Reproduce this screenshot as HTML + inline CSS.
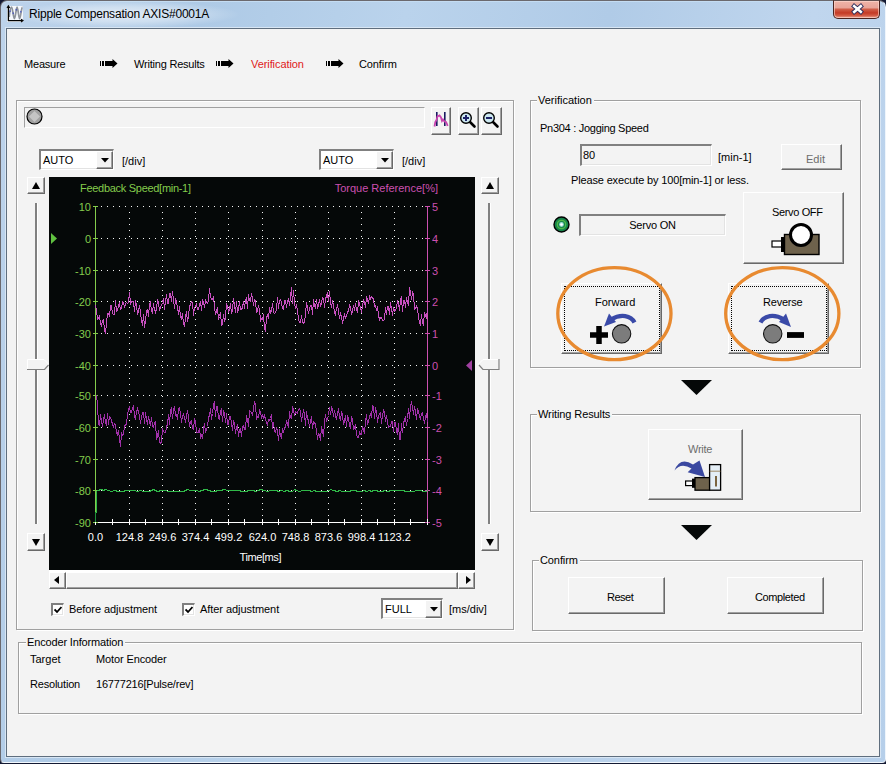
<!DOCTYPE html>
<html><head><meta charset="utf-8">
<style>
*{margin:0;padding:0;box-sizing:border-box}
html,body{width:886px;height:764px;overflow:hidden;background:#141a34}
body{position:relative;font-family:"Liberation Sans",sans-serif;font-size:11px;color:#000}
.a{position:absolute}
.t{position:absolute;white-space:nowrap;line-height:13px;font-size:11px}
.win{position:absolute;left:0;top:0;width:886px;height:763px;border-radius:7px 7px 4px 4px;
 background:linear-gradient(100deg,#bdd3eb 0%,#aecae6 20%,#bad3ec 40%,#b0cbe7 60%,#c0d6ee 80%,#b6cfea 100%);
 border:1px solid #6b696e;border-right-color:#eef5fc;border-bottom-color:#f2f8fd;box-shadow:inset 0 1px 0 #c4dcf2}
.client{position:absolute;left:6px;top:28px;width:874px;height:729px;background:#f3f3f3;border:1px solid #5f6e7e;box-shadow:0 0 0 1px #d8e6f4}
.grp{position:absolute;border:1px solid #a0a0a0;box-shadow:1px 1px 0 #fff, inset 1px 1px 0 #fff}
.gt{position:absolute;background:#f3f3f3;padding:0 2px 0 1px;line-height:13px;white-space:nowrap}
.btn{position:absolute;background:#f3f3f3;border-top:1px solid #fff;border-left:1px solid #fff;border-right:1px solid #696969;border-bottom:1px solid #696969;box-shadow:inset -1px -1px 0 #a0a0a0}
.sunk{position:absolute;border-top:1px solid #a0a0a0;border-left:1px solid #a0a0a0;border-right:1px solid #fff;border-bottom:1px solid #fff}
.sunk2{position:absolute;border-top:2px solid #808080;border-left:2px solid #808080;border-right:1px solid #fff;border-bottom:1px solid #fff;box-shadow:inset -1px -1px 0 #e3e3e3}
</style></head><body>
<div class="win"></div>
<!-- title icon -->
<svg class="a" style="left:4px;top:3px" width="24" height="22" viewBox="4 3 24 22">
<rect x="7" y="6" width="16" height="16" fill="#ffffff" opacity="0.85"/>
<path d="M9.2,17 C10,9 10.8,7 11.6,7 C12.5,7 13.4,18.6 14.4,18.6 C15.4,18.6 16.2,7 17.1,7 C18,7 18.7,18.6 19.6,18.6 C20.6,18.6 21.5,7 22.4,7" fill="none" stroke="#8a9098" stroke-width="1.7"/>
<path d="M9.8,10.5 L10.2,12 M13,12.5 L13.4,14 M16,10.5 L16.4,9 M20.6,12.5 L21,11" stroke="#4050c0" stroke-width="1.2"/>
<path d="M8.4,6.5 V20.6 H22.5" fill="none" stroke="#000" stroke-width="1.3"/>
<path d="M7,8 L8.4,5.8 L9.8,8 M21,19.2 L23,20.6 L21,22" fill="none" stroke="#000" stroke-width="1.1"/>
</svg>
<div class="a" style="left:10px;top:1px;width:230px;height:27px;background:radial-gradient(ellipse 50% 50% at 50% 50%,rgba(255,255,255,0.6) 0%,rgba(255,255,255,0.35) 55%,rgba(255,255,255,0) 100%)"></div>
<div class="t" style="left:29px;top:7px;font-size:12px;line-height:15px;color:#000;letter-spacing:-0.2px">Ripple Compensation AXIS#0001A</div>
<!-- close button -->
<div class="a" style="left:833px;top:0;width:47px;height:19px;border:1px solid #4a2420;border-top:1px solid #605050;border-radius:0 0 5px 5px;background:linear-gradient(#eeb4a8 0%,#e8a498 40%,#d0604a 48%,#c43a26 70%,#d25a44 85%,#e9a493 100%);box-shadow:inset 0 0 0 1px rgba(255,220,210,0.6)"></div>
<svg class="a" style="left:851px;top:3px" width="13" height="12" viewBox="0 0 13 12">
<path d="M3.2,3.2 L9.8,8.8 M9.8,3.2 L3.2,8.8" stroke="#2c2c5a" stroke-width="4.4" stroke-linecap="square"/>
<path d="M3.2,3.2 L9.8,8.8 M9.8,3.2 L3.2,8.8" stroke="#ffffff" stroke-width="2.6" stroke-linecap="square"/>
</svg>

<div class="client"></div>

<!-- steps -->
<div class="t" style="left:24px;top:58px;letter-spacing:-0.2px">Measure</div>
<div class="t" style="left:134px;top:58px;letter-spacing:-0.21px">Writing Results</div>
<div class="t" style="left:251px;top:58px;color:#e02020;letter-spacing:-0.08px">Verification</div>
<div class="t" style="left:359px;top:58px;letter-spacing:-0.11px">Confirm</div>
<svg class="a" style="left:99px;top:58px" width="20" height="11"><path d="M1,3h1v5h-1z M3,3h2v5h-2z M6,3h7.5v-2l5,4.5l-5,4.5v-2h-7.5z" fill="#000"/></svg>
<svg class="a" style="left:215px;top:58px" width="20" height="11"><path d="M1,3h1v5h-1z M3,3h2v5h-2z M6,3h7.5v-2l5,4.5l-5,4.5v-2h-7.5z" fill="#000"/></svg>
<svg class="a" style="left:325px;top:58px" width="20" height="11"><path d="M1,3h1v5h-1z M3,3h2v5h-2z M6,3h7.5v-2l5,4.5l-5,4.5v-2h-7.5z" fill="#000"/></svg>

<!-- chart group -->
<div class="grp" style="left:16px;top:100px;width:498px;height:530px"></div>
<div class="sunk" style="left:24px;top:107px;width:401px;height:21px"></div>
<svg class="a" style="left:26px;top:108px" width="17" height="17" viewBox="0 0 17 17">
<circle cx="8.5" cy="8.5" r="7.5" fill="#a0a0a0" stroke="#000" stroke-width="1.2"/>
<path d="M8.5,3 L14,8.5 L8.5,14 L3,8.5z" fill="#c4c4c4"/>
</svg>
<!-- toolbar buttons -->
<div class="btn" style="left:431px;top:107px;width:20px;height:28px"></div>
<div class="btn" style="left:458px;top:107px;width:21px;height:28px"></div>
<div class="btn" style="left:481px;top:107px;width:21px;height:28px"></div>
<svg class="a" style="left:428px;top:104px" width="28" height="36" viewBox="428 104 28 36">
<path d="M436.8,112 V126 M444.8,112 V126" stroke="#1a1a60" stroke-width="1.6"/>
<path d="M434.5,126.5 L435.3,122 L436.5,120 L437.5,116.5 L439.5,115.5 L441,117.5 L442,121 L443,119.5 L444.5,121.5 L446,122 L447,124 L447.6,126" fill="none" stroke="#c844b0" stroke-width="1.8"/>
</svg>
<svg class="a" style="left:459px;top:111px" width="20" height="20" viewBox="0 0 20 20">
<path d="M11,11 L15.5,15.5" stroke="#000" stroke-width="2.6" stroke-linecap="round"/>
<circle cx="7" cy="7" r="5.3" fill="#cce8f0" stroke="#000" stroke-width="1.4"/>
<path d="M4,7 H10 M7,4 V10" stroke="#1c2068" stroke-width="2"/>
</svg>
<svg class="a" style="left:482px;top:111px" width="20" height="20" viewBox="0 0 20 20">
<path d="M11,11 L15.5,15.5" stroke="#000" stroke-width="2.6" stroke-linecap="round"/>
<circle cx="7" cy="7" r="5.3" fill="#cce8f0" stroke="#000" stroke-width="1.4"/>
<path d="M4,7 H10" stroke="#1c2068" stroke-width="2"/>
</svg>

<!-- combos -->
<div class="sunk2" style="left:39px;top:149px;width:75px;height:21px;background:#fff"></div>
<div class="btn" style="left:96px;top:151px;width:17px;height:18px"></div>
<svg class="a" style="left:101px;top:158px" width="8" height="5"><path d="M0,0H8L4,4.5z" fill="#000"/></svg>
<div class="t" style="left:43px;top:154px">AUTO</div>
<div class="t" style="left:122px;top:155px">[/div]</div>

<div class="sunk2" style="left:319px;top:149px;width:75px;height:21px;background:#fff"></div>
<div class="btn" style="left:376px;top:151px;width:17px;height:18px"></div>
<svg class="a" style="left:381px;top:158px" width="8" height="5"><path d="M0,0H8L4,4.5z" fill="#000"/></svg>
<div class="t" style="left:323px;top:154px">AUTO</div>
<div class="t" style="left:402px;top:155px">[/div]</div>

<!-- vertical sliders left -->
<div class="btn" style="left:27px;top:177px;width:18px;height:17px"></div>
<svg class="a" style="left:32px;top:182px" width="8" height="7"><path d="M0,7H8L4,0z" fill="#000"/></svg>
<div class="a" style="left:35px;top:203px;width:2px;height:321px;background:#808080;box-shadow:1px 0 0 #fff"></div>
<svg class="a" style="left:27px;top:359px" width="22" height="11"><path d="M0.5,0.5 H17 L21.5,5 L17,10.5 H0.5z" fill="#f3f3f3" stroke="#fff"/><path d="M0,10.5 H17.5 L21.5,6" fill="none" stroke="#808080" stroke-width="1.2"/></svg>
<div class="btn" style="left:27px;top:533px;width:18px;height:18px"></div>
<svg class="a" style="left:32px;top:539px" width="8" height="7"><path d="M0,0H8L4,7z" fill="#000"/></svg>

<!-- vertical sliders right -->
<div class="btn" style="left:481px;top:177px;width:18px;height:17px"></div>
<svg class="a" style="left:486px;top:182px" width="8" height="7"><path d="M0,7H8L4,0z" fill="#000"/></svg>
<div class="a" style="left:488px;top:203px;width:2px;height:321px;background:#808080;box-shadow:1px 0 0 #fff"></div>
<svg class="a" style="left:478px;top:359px" width="22" height="11"><path d="M21.5,0.5 H5 L0.5,5 L5,10.5 H21.5z" fill="#f3f3f3" stroke="#fff"/><path d="M21,0 V10.5 H5 L1,6" fill="none" stroke="#808080" stroke-width="1.2"/></svg>
<div class="btn" style="left:481px;top:533px;width:18px;height:18px"></div>
<svg class="a" style="left:486px;top:539px" width="8" height="7"><path d="M0,0H8L4,7z" fill="#000"/></svg>

<svg width="886" height="764" style="position:absolute;left:0;top:0">
<rect x="49" y="177" width="426" height="393" fill="#050808"/>
<g fill="#f4f4f4" shape-rendering="crispEdges"><rect x="101" y="206" width="1" height="1"/><rect x="107" y="206" width="1" height="1"/><rect x="113" y="206" width="1" height="1"/><rect x="119" y="206" width="1" height="1"/><rect x="125" y="206" width="1" height="1"/><rect x="131" y="206" width="1" height="1"/><rect x="137" y="206" width="1" height="1"/><rect x="143" y="206" width="1" height="1"/><rect x="149" y="206" width="1" height="1"/><rect x="155" y="206" width="1" height="1"/><rect x="161" y="206" width="1" height="1"/><rect x="167" y="206" width="1" height="1"/><rect x="173" y="206" width="1" height="1"/><rect x="179" y="206" width="1" height="1"/><rect x="184" y="206" width="1" height="1"/><rect x="190" y="206" width="1" height="1"/><rect x="196" y="206" width="1" height="1"/><rect x="202" y="206" width="1" height="1"/><rect x="208" y="206" width="1" height="1"/><rect x="214" y="206" width="1" height="1"/><rect x="220" y="206" width="1" height="1"/><rect x="226" y="206" width="1" height="1"/><rect x="232" y="206" width="1" height="1"/><rect x="238" y="206" width="1" height="1"/><rect x="244" y="206" width="1" height="1"/><rect x="250" y="206" width="1" height="1"/><rect x="256" y="206" width="1" height="1"/><rect x="262" y="206" width="1" height="1"/><rect x="267" y="206" width="1" height="1"/><rect x="273" y="206" width="1" height="1"/><rect x="279" y="206" width="1" height="1"/><rect x="285" y="206" width="1" height="1"/><rect x="291" y="206" width="1" height="1"/><rect x="297" y="206" width="1" height="1"/><rect x="303" y="206" width="1" height="1"/><rect x="309" y="206" width="1" height="1"/><rect x="315" y="206" width="1" height="1"/><rect x="321" y="206" width="1" height="1"/><rect x="327" y="206" width="1" height="1"/><rect x="333" y="206" width="1" height="1"/><rect x="339" y="206" width="1" height="1"/><rect x="345" y="206" width="1" height="1"/><rect x="350" y="206" width="1" height="1"/><rect x="356" y="206" width="1" height="1"/><rect x="362" y="206" width="1" height="1"/><rect x="368" y="206" width="1" height="1"/><rect x="374" y="206" width="1" height="1"/><rect x="380" y="206" width="1" height="1"/><rect x="386" y="206" width="1" height="1"/><rect x="392" y="206" width="1" height="1"/><rect x="398" y="206" width="1" height="1"/><rect x="404" y="206" width="1" height="1"/><rect x="410" y="206" width="1" height="1"/><rect x="416" y="206" width="1" height="1"/><rect x="422" y="206" width="1" height="1"/><rect x="101" y="238" width="1" height="1"/><rect x="107" y="238" width="1" height="1"/><rect x="113" y="238" width="1" height="1"/><rect x="119" y="238" width="1" height="1"/><rect x="125" y="238" width="1" height="1"/><rect x="131" y="238" width="1" height="1"/><rect x="137" y="238" width="1" height="1"/><rect x="143" y="238" width="1" height="1"/><rect x="149" y="238" width="1" height="1"/><rect x="155" y="238" width="1" height="1"/><rect x="161" y="238" width="1" height="1"/><rect x="167" y="238" width="1" height="1"/><rect x="173" y="238" width="1" height="1"/><rect x="179" y="238" width="1" height="1"/><rect x="184" y="238" width="1" height="1"/><rect x="190" y="238" width="1" height="1"/><rect x="196" y="238" width="1" height="1"/><rect x="202" y="238" width="1" height="1"/><rect x="208" y="238" width="1" height="1"/><rect x="214" y="238" width="1" height="1"/><rect x="220" y="238" width="1" height="1"/><rect x="226" y="238" width="1" height="1"/><rect x="232" y="238" width="1" height="1"/><rect x="238" y="238" width="1" height="1"/><rect x="244" y="238" width="1" height="1"/><rect x="250" y="238" width="1" height="1"/><rect x="256" y="238" width="1" height="1"/><rect x="262" y="238" width="1" height="1"/><rect x="267" y="238" width="1" height="1"/><rect x="273" y="238" width="1" height="1"/><rect x="279" y="238" width="1" height="1"/><rect x="285" y="238" width="1" height="1"/><rect x="291" y="238" width="1" height="1"/><rect x="297" y="238" width="1" height="1"/><rect x="303" y="238" width="1" height="1"/><rect x="309" y="238" width="1" height="1"/><rect x="315" y="238" width="1" height="1"/><rect x="321" y="238" width="1" height="1"/><rect x="327" y="238" width="1" height="1"/><rect x="333" y="238" width="1" height="1"/><rect x="339" y="238" width="1" height="1"/><rect x="345" y="238" width="1" height="1"/><rect x="350" y="238" width="1" height="1"/><rect x="356" y="238" width="1" height="1"/><rect x="362" y="238" width="1" height="1"/><rect x="368" y="238" width="1" height="1"/><rect x="374" y="238" width="1" height="1"/><rect x="380" y="238" width="1" height="1"/><rect x="386" y="238" width="1" height="1"/><rect x="392" y="238" width="1" height="1"/><rect x="398" y="238" width="1" height="1"/><rect x="404" y="238" width="1" height="1"/><rect x="410" y="238" width="1" height="1"/><rect x="416" y="238" width="1" height="1"/><rect x="422" y="238" width="1" height="1"/><rect x="101" y="270" width="1" height="1"/><rect x="107" y="270" width="1" height="1"/><rect x="113" y="270" width="1" height="1"/><rect x="119" y="270" width="1" height="1"/><rect x="125" y="270" width="1" height="1"/><rect x="131" y="270" width="1" height="1"/><rect x="137" y="270" width="1" height="1"/><rect x="143" y="270" width="1" height="1"/><rect x="149" y="270" width="1" height="1"/><rect x="155" y="270" width="1" height="1"/><rect x="161" y="270" width="1" height="1"/><rect x="167" y="270" width="1" height="1"/><rect x="173" y="270" width="1" height="1"/><rect x="179" y="270" width="1" height="1"/><rect x="184" y="270" width="1" height="1"/><rect x="190" y="270" width="1" height="1"/><rect x="196" y="270" width="1" height="1"/><rect x="202" y="270" width="1" height="1"/><rect x="208" y="270" width="1" height="1"/><rect x="214" y="270" width="1" height="1"/><rect x="220" y="270" width="1" height="1"/><rect x="226" y="270" width="1" height="1"/><rect x="232" y="270" width="1" height="1"/><rect x="238" y="270" width="1" height="1"/><rect x="244" y="270" width="1" height="1"/><rect x="250" y="270" width="1" height="1"/><rect x="256" y="270" width="1" height="1"/><rect x="262" y="270" width="1" height="1"/><rect x="267" y="270" width="1" height="1"/><rect x="273" y="270" width="1" height="1"/><rect x="279" y="270" width="1" height="1"/><rect x="285" y="270" width="1" height="1"/><rect x="291" y="270" width="1" height="1"/><rect x="297" y="270" width="1" height="1"/><rect x="303" y="270" width="1" height="1"/><rect x="309" y="270" width="1" height="1"/><rect x="315" y="270" width="1" height="1"/><rect x="321" y="270" width="1" height="1"/><rect x="327" y="270" width="1" height="1"/><rect x="333" y="270" width="1" height="1"/><rect x="339" y="270" width="1" height="1"/><rect x="345" y="270" width="1" height="1"/><rect x="350" y="270" width="1" height="1"/><rect x="356" y="270" width="1" height="1"/><rect x="362" y="270" width="1" height="1"/><rect x="368" y="270" width="1" height="1"/><rect x="374" y="270" width="1" height="1"/><rect x="380" y="270" width="1" height="1"/><rect x="386" y="270" width="1" height="1"/><rect x="392" y="270" width="1" height="1"/><rect x="398" y="270" width="1" height="1"/><rect x="404" y="270" width="1" height="1"/><rect x="410" y="270" width="1" height="1"/><rect x="416" y="270" width="1" height="1"/><rect x="422" y="270" width="1" height="1"/><rect x="101" y="301" width="1" height="1"/><rect x="107" y="301" width="1" height="1"/><rect x="113" y="301" width="1" height="1"/><rect x="119" y="301" width="1" height="1"/><rect x="125" y="301" width="1" height="1"/><rect x="131" y="301" width="1" height="1"/><rect x="137" y="301" width="1" height="1"/><rect x="143" y="301" width="1" height="1"/><rect x="149" y="301" width="1" height="1"/><rect x="155" y="301" width="1" height="1"/><rect x="161" y="301" width="1" height="1"/><rect x="167" y="301" width="1" height="1"/><rect x="173" y="301" width="1" height="1"/><rect x="179" y="301" width="1" height="1"/><rect x="184" y="301" width="1" height="1"/><rect x="190" y="301" width="1" height="1"/><rect x="196" y="301" width="1" height="1"/><rect x="202" y="301" width="1" height="1"/><rect x="208" y="301" width="1" height="1"/><rect x="214" y="301" width="1" height="1"/><rect x="220" y="301" width="1" height="1"/><rect x="226" y="301" width="1" height="1"/><rect x="232" y="301" width="1" height="1"/><rect x="238" y="301" width="1" height="1"/><rect x="244" y="301" width="1" height="1"/><rect x="250" y="301" width="1" height="1"/><rect x="256" y="301" width="1" height="1"/><rect x="262" y="301" width="1" height="1"/><rect x="267" y="301" width="1" height="1"/><rect x="273" y="301" width="1" height="1"/><rect x="279" y="301" width="1" height="1"/><rect x="285" y="301" width="1" height="1"/><rect x="291" y="301" width="1" height="1"/><rect x="297" y="301" width="1" height="1"/><rect x="303" y="301" width="1" height="1"/><rect x="309" y="301" width="1" height="1"/><rect x="315" y="301" width="1" height="1"/><rect x="321" y="301" width="1" height="1"/><rect x="327" y="301" width="1" height="1"/><rect x="333" y="301" width="1" height="1"/><rect x="339" y="301" width="1" height="1"/><rect x="345" y="301" width="1" height="1"/><rect x="350" y="301" width="1" height="1"/><rect x="356" y="301" width="1" height="1"/><rect x="362" y="301" width="1" height="1"/><rect x="368" y="301" width="1" height="1"/><rect x="374" y="301" width="1" height="1"/><rect x="380" y="301" width="1" height="1"/><rect x="386" y="301" width="1" height="1"/><rect x="392" y="301" width="1" height="1"/><rect x="398" y="301" width="1" height="1"/><rect x="404" y="301" width="1" height="1"/><rect x="410" y="301" width="1" height="1"/><rect x="416" y="301" width="1" height="1"/><rect x="422" y="301" width="1" height="1"/><rect x="101" y="333" width="1" height="1"/><rect x="107" y="333" width="1" height="1"/><rect x="113" y="333" width="1" height="1"/><rect x="119" y="333" width="1" height="1"/><rect x="125" y="333" width="1" height="1"/><rect x="131" y="333" width="1" height="1"/><rect x="137" y="333" width="1" height="1"/><rect x="143" y="333" width="1" height="1"/><rect x="149" y="333" width="1" height="1"/><rect x="155" y="333" width="1" height="1"/><rect x="161" y="333" width="1" height="1"/><rect x="167" y="333" width="1" height="1"/><rect x="173" y="333" width="1" height="1"/><rect x="179" y="333" width="1" height="1"/><rect x="184" y="333" width="1" height="1"/><rect x="190" y="333" width="1" height="1"/><rect x="196" y="333" width="1" height="1"/><rect x="202" y="333" width="1" height="1"/><rect x="208" y="333" width="1" height="1"/><rect x="214" y="333" width="1" height="1"/><rect x="220" y="333" width="1" height="1"/><rect x="226" y="333" width="1" height="1"/><rect x="232" y="333" width="1" height="1"/><rect x="238" y="333" width="1" height="1"/><rect x="244" y="333" width="1" height="1"/><rect x="250" y="333" width="1" height="1"/><rect x="256" y="333" width="1" height="1"/><rect x="262" y="333" width="1" height="1"/><rect x="267" y="333" width="1" height="1"/><rect x="273" y="333" width="1" height="1"/><rect x="279" y="333" width="1" height="1"/><rect x="285" y="333" width="1" height="1"/><rect x="291" y="333" width="1" height="1"/><rect x="297" y="333" width="1" height="1"/><rect x="303" y="333" width="1" height="1"/><rect x="309" y="333" width="1" height="1"/><rect x="315" y="333" width="1" height="1"/><rect x="321" y="333" width="1" height="1"/><rect x="327" y="333" width="1" height="1"/><rect x="333" y="333" width="1" height="1"/><rect x="339" y="333" width="1" height="1"/><rect x="345" y="333" width="1" height="1"/><rect x="350" y="333" width="1" height="1"/><rect x="356" y="333" width="1" height="1"/><rect x="362" y="333" width="1" height="1"/><rect x="368" y="333" width="1" height="1"/><rect x="374" y="333" width="1" height="1"/><rect x="380" y="333" width="1" height="1"/><rect x="386" y="333" width="1" height="1"/><rect x="392" y="333" width="1" height="1"/><rect x="398" y="333" width="1" height="1"/><rect x="404" y="333" width="1" height="1"/><rect x="410" y="333" width="1" height="1"/><rect x="416" y="333" width="1" height="1"/><rect x="422" y="333" width="1" height="1"/><rect x="101" y="365" width="1" height="1"/><rect x="107" y="365" width="1" height="1"/><rect x="113" y="365" width="1" height="1"/><rect x="119" y="365" width="1" height="1"/><rect x="125" y="365" width="1" height="1"/><rect x="131" y="365" width="1" height="1"/><rect x="137" y="365" width="1" height="1"/><rect x="143" y="365" width="1" height="1"/><rect x="149" y="365" width="1" height="1"/><rect x="155" y="365" width="1" height="1"/><rect x="161" y="365" width="1" height="1"/><rect x="167" y="365" width="1" height="1"/><rect x="173" y="365" width="1" height="1"/><rect x="179" y="365" width="1" height="1"/><rect x="184" y="365" width="1" height="1"/><rect x="190" y="365" width="1" height="1"/><rect x="196" y="365" width="1" height="1"/><rect x="202" y="365" width="1" height="1"/><rect x="208" y="365" width="1" height="1"/><rect x="214" y="365" width="1" height="1"/><rect x="220" y="365" width="1" height="1"/><rect x="226" y="365" width="1" height="1"/><rect x="232" y="365" width="1" height="1"/><rect x="238" y="365" width="1" height="1"/><rect x="244" y="365" width="1" height="1"/><rect x="250" y="365" width="1" height="1"/><rect x="256" y="365" width="1" height="1"/><rect x="262" y="365" width="1" height="1"/><rect x="267" y="365" width="1" height="1"/><rect x="273" y="365" width="1" height="1"/><rect x="279" y="365" width="1" height="1"/><rect x="285" y="365" width="1" height="1"/><rect x="291" y="365" width="1" height="1"/><rect x="297" y="365" width="1" height="1"/><rect x="303" y="365" width="1" height="1"/><rect x="309" y="365" width="1" height="1"/><rect x="315" y="365" width="1" height="1"/><rect x="321" y="365" width="1" height="1"/><rect x="327" y="365" width="1" height="1"/><rect x="333" y="365" width="1" height="1"/><rect x="339" y="365" width="1" height="1"/><rect x="345" y="365" width="1" height="1"/><rect x="350" y="365" width="1" height="1"/><rect x="356" y="365" width="1" height="1"/><rect x="362" y="365" width="1" height="1"/><rect x="368" y="365" width="1" height="1"/><rect x="374" y="365" width="1" height="1"/><rect x="380" y="365" width="1" height="1"/><rect x="386" y="365" width="1" height="1"/><rect x="392" y="365" width="1" height="1"/><rect x="398" y="365" width="1" height="1"/><rect x="404" y="365" width="1" height="1"/><rect x="410" y="365" width="1" height="1"/><rect x="416" y="365" width="1" height="1"/><rect x="422" y="365" width="1" height="1"/><rect x="101" y="395" width="1" height="1"/><rect x="107" y="395" width="1" height="1"/><rect x="113" y="395" width="1" height="1"/><rect x="119" y="395" width="1" height="1"/><rect x="125" y="395" width="1" height="1"/><rect x="131" y="395" width="1" height="1"/><rect x="137" y="395" width="1" height="1"/><rect x="143" y="395" width="1" height="1"/><rect x="149" y="395" width="1" height="1"/><rect x="155" y="395" width="1" height="1"/><rect x="161" y="395" width="1" height="1"/><rect x="167" y="395" width="1" height="1"/><rect x="173" y="395" width="1" height="1"/><rect x="179" y="395" width="1" height="1"/><rect x="184" y="395" width="1" height="1"/><rect x="190" y="395" width="1" height="1"/><rect x="196" y="395" width="1" height="1"/><rect x="202" y="395" width="1" height="1"/><rect x="208" y="395" width="1" height="1"/><rect x="214" y="395" width="1" height="1"/><rect x="220" y="395" width="1" height="1"/><rect x="226" y="395" width="1" height="1"/><rect x="232" y="395" width="1" height="1"/><rect x="238" y="395" width="1" height="1"/><rect x="244" y="395" width="1" height="1"/><rect x="250" y="395" width="1" height="1"/><rect x="256" y="395" width="1" height="1"/><rect x="262" y="395" width="1" height="1"/><rect x="267" y="395" width="1" height="1"/><rect x="273" y="395" width="1" height="1"/><rect x="279" y="395" width="1" height="1"/><rect x="285" y="395" width="1" height="1"/><rect x="291" y="395" width="1" height="1"/><rect x="297" y="395" width="1" height="1"/><rect x="303" y="395" width="1" height="1"/><rect x="309" y="395" width="1" height="1"/><rect x="315" y="395" width="1" height="1"/><rect x="321" y="395" width="1" height="1"/><rect x="327" y="395" width="1" height="1"/><rect x="333" y="395" width="1" height="1"/><rect x="339" y="395" width="1" height="1"/><rect x="345" y="395" width="1" height="1"/><rect x="350" y="395" width="1" height="1"/><rect x="356" y="395" width="1" height="1"/><rect x="362" y="395" width="1" height="1"/><rect x="368" y="395" width="1" height="1"/><rect x="374" y="395" width="1" height="1"/><rect x="380" y="395" width="1" height="1"/><rect x="386" y="395" width="1" height="1"/><rect x="392" y="395" width="1" height="1"/><rect x="398" y="395" width="1" height="1"/><rect x="404" y="395" width="1" height="1"/><rect x="410" y="395" width="1" height="1"/><rect x="416" y="395" width="1" height="1"/><rect x="422" y="395" width="1" height="1"/><rect x="101" y="427" width="1" height="1"/><rect x="107" y="427" width="1" height="1"/><rect x="113" y="427" width="1" height="1"/><rect x="119" y="427" width="1" height="1"/><rect x="125" y="427" width="1" height="1"/><rect x="131" y="427" width="1" height="1"/><rect x="137" y="427" width="1" height="1"/><rect x="143" y="427" width="1" height="1"/><rect x="149" y="427" width="1" height="1"/><rect x="155" y="427" width="1" height="1"/><rect x="161" y="427" width="1" height="1"/><rect x="167" y="427" width="1" height="1"/><rect x="173" y="427" width="1" height="1"/><rect x="179" y="427" width="1" height="1"/><rect x="184" y="427" width="1" height="1"/><rect x="190" y="427" width="1" height="1"/><rect x="196" y="427" width="1" height="1"/><rect x="202" y="427" width="1" height="1"/><rect x="208" y="427" width="1" height="1"/><rect x="214" y="427" width="1" height="1"/><rect x="220" y="427" width="1" height="1"/><rect x="226" y="427" width="1" height="1"/><rect x="232" y="427" width="1" height="1"/><rect x="238" y="427" width="1" height="1"/><rect x="244" y="427" width="1" height="1"/><rect x="250" y="427" width="1" height="1"/><rect x="256" y="427" width="1" height="1"/><rect x="262" y="427" width="1" height="1"/><rect x="267" y="427" width="1" height="1"/><rect x="273" y="427" width="1" height="1"/><rect x="279" y="427" width="1" height="1"/><rect x="285" y="427" width="1" height="1"/><rect x="291" y="427" width="1" height="1"/><rect x="297" y="427" width="1" height="1"/><rect x="303" y="427" width="1" height="1"/><rect x="309" y="427" width="1" height="1"/><rect x="315" y="427" width="1" height="1"/><rect x="321" y="427" width="1" height="1"/><rect x="327" y="427" width="1" height="1"/><rect x="333" y="427" width="1" height="1"/><rect x="339" y="427" width="1" height="1"/><rect x="345" y="427" width="1" height="1"/><rect x="350" y="427" width="1" height="1"/><rect x="356" y="427" width="1" height="1"/><rect x="362" y="427" width="1" height="1"/><rect x="368" y="427" width="1" height="1"/><rect x="374" y="427" width="1" height="1"/><rect x="380" y="427" width="1" height="1"/><rect x="386" y="427" width="1" height="1"/><rect x="392" y="427" width="1" height="1"/><rect x="398" y="427" width="1" height="1"/><rect x="404" y="427" width="1" height="1"/><rect x="410" y="427" width="1" height="1"/><rect x="416" y="427" width="1" height="1"/><rect x="422" y="427" width="1" height="1"/><rect x="101" y="459" width="1" height="1"/><rect x="107" y="459" width="1" height="1"/><rect x="113" y="459" width="1" height="1"/><rect x="119" y="459" width="1" height="1"/><rect x="125" y="459" width="1" height="1"/><rect x="131" y="459" width="1" height="1"/><rect x="137" y="459" width="1" height="1"/><rect x="143" y="459" width="1" height="1"/><rect x="149" y="459" width="1" height="1"/><rect x="155" y="459" width="1" height="1"/><rect x="161" y="459" width="1" height="1"/><rect x="167" y="459" width="1" height="1"/><rect x="173" y="459" width="1" height="1"/><rect x="179" y="459" width="1" height="1"/><rect x="184" y="459" width="1" height="1"/><rect x="190" y="459" width="1" height="1"/><rect x="196" y="459" width="1" height="1"/><rect x="202" y="459" width="1" height="1"/><rect x="208" y="459" width="1" height="1"/><rect x="214" y="459" width="1" height="1"/><rect x="220" y="459" width="1" height="1"/><rect x="226" y="459" width="1" height="1"/><rect x="232" y="459" width="1" height="1"/><rect x="238" y="459" width="1" height="1"/><rect x="244" y="459" width="1" height="1"/><rect x="250" y="459" width="1" height="1"/><rect x="256" y="459" width="1" height="1"/><rect x="262" y="459" width="1" height="1"/><rect x="267" y="459" width="1" height="1"/><rect x="273" y="459" width="1" height="1"/><rect x="279" y="459" width="1" height="1"/><rect x="285" y="459" width="1" height="1"/><rect x="291" y="459" width="1" height="1"/><rect x="297" y="459" width="1" height="1"/><rect x="303" y="459" width="1" height="1"/><rect x="309" y="459" width="1" height="1"/><rect x="315" y="459" width="1" height="1"/><rect x="321" y="459" width="1" height="1"/><rect x="327" y="459" width="1" height="1"/><rect x="333" y="459" width="1" height="1"/><rect x="339" y="459" width="1" height="1"/><rect x="345" y="459" width="1" height="1"/><rect x="350" y="459" width="1" height="1"/><rect x="356" y="459" width="1" height="1"/><rect x="362" y="459" width="1" height="1"/><rect x="368" y="459" width="1" height="1"/><rect x="374" y="459" width="1" height="1"/><rect x="380" y="459" width="1" height="1"/><rect x="386" y="459" width="1" height="1"/><rect x="392" y="459" width="1" height="1"/><rect x="398" y="459" width="1" height="1"/><rect x="404" y="459" width="1" height="1"/><rect x="410" y="459" width="1" height="1"/><rect x="416" y="459" width="1" height="1"/><rect x="422" y="459" width="1" height="1"/><rect x="101" y="490" width="1" height="1"/><rect x="107" y="490" width="1" height="1"/><rect x="113" y="490" width="1" height="1"/><rect x="119" y="490" width="1" height="1"/><rect x="125" y="490" width="1" height="1"/><rect x="131" y="490" width="1" height="1"/><rect x="137" y="490" width="1" height="1"/><rect x="143" y="490" width="1" height="1"/><rect x="149" y="490" width="1" height="1"/><rect x="155" y="490" width="1" height="1"/><rect x="161" y="490" width="1" height="1"/><rect x="167" y="490" width="1" height="1"/><rect x="173" y="490" width="1" height="1"/><rect x="179" y="490" width="1" height="1"/><rect x="184" y="490" width="1" height="1"/><rect x="190" y="490" width="1" height="1"/><rect x="196" y="490" width="1" height="1"/><rect x="202" y="490" width="1" height="1"/><rect x="208" y="490" width="1" height="1"/><rect x="214" y="490" width="1" height="1"/><rect x="220" y="490" width="1" height="1"/><rect x="226" y="490" width="1" height="1"/><rect x="232" y="490" width="1" height="1"/><rect x="238" y="490" width="1" height="1"/><rect x="244" y="490" width="1" height="1"/><rect x="250" y="490" width="1" height="1"/><rect x="256" y="490" width="1" height="1"/><rect x="262" y="490" width="1" height="1"/><rect x="267" y="490" width="1" height="1"/><rect x="273" y="490" width="1" height="1"/><rect x="279" y="490" width="1" height="1"/><rect x="285" y="490" width="1" height="1"/><rect x="291" y="490" width="1" height="1"/><rect x="297" y="490" width="1" height="1"/><rect x="303" y="490" width="1" height="1"/><rect x="309" y="490" width="1" height="1"/><rect x="315" y="490" width="1" height="1"/><rect x="321" y="490" width="1" height="1"/><rect x="327" y="490" width="1" height="1"/><rect x="333" y="490" width="1" height="1"/><rect x="339" y="490" width="1" height="1"/><rect x="345" y="490" width="1" height="1"/><rect x="350" y="490" width="1" height="1"/><rect x="356" y="490" width="1" height="1"/><rect x="362" y="490" width="1" height="1"/><rect x="368" y="490" width="1" height="1"/><rect x="374" y="490" width="1" height="1"/><rect x="380" y="490" width="1" height="1"/><rect x="386" y="490" width="1" height="1"/><rect x="392" y="490" width="1" height="1"/><rect x="398" y="490" width="1" height="1"/><rect x="404" y="490" width="1" height="1"/><rect x="410" y="490" width="1" height="1"/><rect x="416" y="490" width="1" height="1"/><rect x="422" y="490" width="1" height="1"/><rect x="101" y="522" width="1" height="1"/><rect x="107" y="522" width="1" height="1"/><rect x="113" y="522" width="1" height="1"/><rect x="119" y="522" width="1" height="1"/><rect x="125" y="522" width="1" height="1"/><rect x="131" y="522" width="1" height="1"/><rect x="137" y="522" width="1" height="1"/><rect x="143" y="522" width="1" height="1"/><rect x="149" y="522" width="1" height="1"/><rect x="155" y="522" width="1" height="1"/><rect x="161" y="522" width="1" height="1"/><rect x="167" y="522" width="1" height="1"/><rect x="173" y="522" width="1" height="1"/><rect x="179" y="522" width="1" height="1"/><rect x="184" y="522" width="1" height="1"/><rect x="190" y="522" width="1" height="1"/><rect x="196" y="522" width="1" height="1"/><rect x="202" y="522" width="1" height="1"/><rect x="208" y="522" width="1" height="1"/><rect x="214" y="522" width="1" height="1"/><rect x="220" y="522" width="1" height="1"/><rect x="226" y="522" width="1" height="1"/><rect x="232" y="522" width="1" height="1"/><rect x="238" y="522" width="1" height="1"/><rect x="244" y="522" width="1" height="1"/><rect x="250" y="522" width="1" height="1"/><rect x="256" y="522" width="1" height="1"/><rect x="262" y="522" width="1" height="1"/><rect x="267" y="522" width="1" height="1"/><rect x="273" y="522" width="1" height="1"/><rect x="279" y="522" width="1" height="1"/><rect x="285" y="522" width="1" height="1"/><rect x="291" y="522" width="1" height="1"/><rect x="297" y="522" width="1" height="1"/><rect x="303" y="522" width="1" height="1"/><rect x="309" y="522" width="1" height="1"/><rect x="315" y="522" width="1" height="1"/><rect x="321" y="522" width="1" height="1"/><rect x="327" y="522" width="1" height="1"/><rect x="333" y="522" width="1" height="1"/><rect x="339" y="522" width="1" height="1"/><rect x="345" y="522" width="1" height="1"/><rect x="350" y="522" width="1" height="1"/><rect x="356" y="522" width="1" height="1"/><rect x="362" y="522" width="1" height="1"/><rect x="368" y="522" width="1" height="1"/><rect x="374" y="522" width="1" height="1"/><rect x="380" y="522" width="1" height="1"/><rect x="386" y="522" width="1" height="1"/><rect x="392" y="522" width="1" height="1"/><rect x="398" y="522" width="1" height="1"/><rect x="404" y="522" width="1" height="1"/><rect x="410" y="522" width="1" height="1"/><rect x="416" y="522" width="1" height="1"/><rect x="422" y="522" width="1" height="1"/><rect x="129" y="212" width="1" height="1"/><rect x="129" y="218" width="1" height="1"/><rect x="129" y="224" width="1" height="1"/><rect x="129" y="230" width="1" height="1"/><rect x="129" y="236" width="1" height="1"/><rect x="129" y="242" width="1" height="1"/><rect x="129" y="248" width="1" height="1"/><rect x="129" y="254" width="1" height="1"/><rect x="129" y="260" width="1" height="1"/><rect x="129" y="266" width="1" height="1"/><rect x="129" y="272" width="1" height="1"/><rect x="129" y="278" width="1" height="1"/><rect x="129" y="284" width="1" height="1"/><rect x="129" y="290" width="1" height="1"/><rect x="129" y="295" width="1" height="1"/><rect x="129" y="301" width="1" height="1"/><rect x="129" y="307" width="1" height="1"/><rect x="129" y="313" width="1" height="1"/><rect x="129" y="319" width="1" height="1"/><rect x="129" y="325" width="1" height="1"/><rect x="129" y="331" width="1" height="1"/><rect x="129" y="337" width="1" height="1"/><rect x="129" y="343" width="1" height="1"/><rect x="129" y="349" width="1" height="1"/><rect x="129" y="355" width="1" height="1"/><rect x="129" y="361" width="1" height="1"/><rect x="129" y="367" width="1" height="1"/><rect x="129" y="373" width="1" height="1"/><rect x="129" y="378" width="1" height="1"/><rect x="129" y="384" width="1" height="1"/><rect x="129" y="390" width="1" height="1"/><rect x="129" y="396" width="1" height="1"/><rect x="129" y="402" width="1" height="1"/><rect x="129" y="408" width="1" height="1"/><rect x="129" y="414" width="1" height="1"/><rect x="129" y="420" width="1" height="1"/><rect x="129" y="426" width="1" height="1"/><rect x="129" y="432" width="1" height="1"/><rect x="129" y="438" width="1" height="1"/><rect x="129" y="444" width="1" height="1"/><rect x="129" y="450" width="1" height="1"/><rect x="129" y="456" width="1" height="1"/><rect x="129" y="461" width="1" height="1"/><rect x="129" y="467" width="1" height="1"/><rect x="129" y="473" width="1" height="1"/><rect x="129" y="479" width="1" height="1"/><rect x="129" y="485" width="1" height="1"/><rect x="129" y="491" width="1" height="1"/><rect x="129" y="497" width="1" height="1"/><rect x="129" y="503" width="1" height="1"/><rect x="129" y="509" width="1" height="1"/><rect x="129" y="515" width="1" height="1"/><rect x="129" y="521" width="1" height="1"/><rect x="162" y="212" width="1" height="1"/><rect x="162" y="218" width="1" height="1"/><rect x="162" y="224" width="1" height="1"/><rect x="162" y="230" width="1" height="1"/><rect x="162" y="236" width="1" height="1"/><rect x="162" y="242" width="1" height="1"/><rect x="162" y="248" width="1" height="1"/><rect x="162" y="254" width="1" height="1"/><rect x="162" y="260" width="1" height="1"/><rect x="162" y="266" width="1" height="1"/><rect x="162" y="272" width="1" height="1"/><rect x="162" y="278" width="1" height="1"/><rect x="162" y="284" width="1" height="1"/><rect x="162" y="290" width="1" height="1"/><rect x="162" y="295" width="1" height="1"/><rect x="162" y="301" width="1" height="1"/><rect x="162" y="307" width="1" height="1"/><rect x="162" y="313" width="1" height="1"/><rect x="162" y="319" width="1" height="1"/><rect x="162" y="325" width="1" height="1"/><rect x="162" y="331" width="1" height="1"/><rect x="162" y="337" width="1" height="1"/><rect x="162" y="343" width="1" height="1"/><rect x="162" y="349" width="1" height="1"/><rect x="162" y="355" width="1" height="1"/><rect x="162" y="361" width="1" height="1"/><rect x="162" y="367" width="1" height="1"/><rect x="162" y="373" width="1" height="1"/><rect x="162" y="378" width="1" height="1"/><rect x="162" y="384" width="1" height="1"/><rect x="162" y="390" width="1" height="1"/><rect x="162" y="396" width="1" height="1"/><rect x="162" y="402" width="1" height="1"/><rect x="162" y="408" width="1" height="1"/><rect x="162" y="414" width="1" height="1"/><rect x="162" y="420" width="1" height="1"/><rect x="162" y="426" width="1" height="1"/><rect x="162" y="432" width="1" height="1"/><rect x="162" y="438" width="1" height="1"/><rect x="162" y="444" width="1" height="1"/><rect x="162" y="450" width="1" height="1"/><rect x="162" y="456" width="1" height="1"/><rect x="162" y="461" width="1" height="1"/><rect x="162" y="467" width="1" height="1"/><rect x="162" y="473" width="1" height="1"/><rect x="162" y="479" width="1" height="1"/><rect x="162" y="485" width="1" height="1"/><rect x="162" y="491" width="1" height="1"/><rect x="162" y="497" width="1" height="1"/><rect x="162" y="503" width="1" height="1"/><rect x="162" y="509" width="1" height="1"/><rect x="162" y="515" width="1" height="1"/><rect x="162" y="521" width="1" height="1"/><rect x="195" y="212" width="1" height="1"/><rect x="195" y="218" width="1" height="1"/><rect x="195" y="224" width="1" height="1"/><rect x="195" y="230" width="1" height="1"/><rect x="195" y="236" width="1" height="1"/><rect x="195" y="242" width="1" height="1"/><rect x="195" y="248" width="1" height="1"/><rect x="195" y="254" width="1" height="1"/><rect x="195" y="260" width="1" height="1"/><rect x="195" y="266" width="1" height="1"/><rect x="195" y="272" width="1" height="1"/><rect x="195" y="278" width="1" height="1"/><rect x="195" y="284" width="1" height="1"/><rect x="195" y="290" width="1" height="1"/><rect x="195" y="295" width="1" height="1"/><rect x="195" y="301" width="1" height="1"/><rect x="195" y="307" width="1" height="1"/><rect x="195" y="313" width="1" height="1"/><rect x="195" y="319" width="1" height="1"/><rect x="195" y="325" width="1" height="1"/><rect x="195" y="331" width="1" height="1"/><rect x="195" y="337" width="1" height="1"/><rect x="195" y="343" width="1" height="1"/><rect x="195" y="349" width="1" height="1"/><rect x="195" y="355" width="1" height="1"/><rect x="195" y="361" width="1" height="1"/><rect x="195" y="367" width="1" height="1"/><rect x="195" y="373" width="1" height="1"/><rect x="195" y="378" width="1" height="1"/><rect x="195" y="384" width="1" height="1"/><rect x="195" y="390" width="1" height="1"/><rect x="195" y="396" width="1" height="1"/><rect x="195" y="402" width="1" height="1"/><rect x="195" y="408" width="1" height="1"/><rect x="195" y="414" width="1" height="1"/><rect x="195" y="420" width="1" height="1"/><rect x="195" y="426" width="1" height="1"/><rect x="195" y="432" width="1" height="1"/><rect x="195" y="438" width="1" height="1"/><rect x="195" y="444" width="1" height="1"/><rect x="195" y="450" width="1" height="1"/><rect x="195" y="456" width="1" height="1"/><rect x="195" y="461" width="1" height="1"/><rect x="195" y="467" width="1" height="1"/><rect x="195" y="473" width="1" height="1"/><rect x="195" y="479" width="1" height="1"/><rect x="195" y="485" width="1" height="1"/><rect x="195" y="491" width="1" height="1"/><rect x="195" y="497" width="1" height="1"/><rect x="195" y="503" width="1" height="1"/><rect x="195" y="509" width="1" height="1"/><rect x="195" y="515" width="1" height="1"/><rect x="195" y="521" width="1" height="1"/><rect x="228" y="212" width="1" height="1"/><rect x="228" y="218" width="1" height="1"/><rect x="228" y="224" width="1" height="1"/><rect x="228" y="230" width="1" height="1"/><rect x="228" y="236" width="1" height="1"/><rect x="228" y="242" width="1" height="1"/><rect x="228" y="248" width="1" height="1"/><rect x="228" y="254" width="1" height="1"/><rect x="228" y="260" width="1" height="1"/><rect x="228" y="266" width="1" height="1"/><rect x="228" y="272" width="1" height="1"/><rect x="228" y="278" width="1" height="1"/><rect x="228" y="284" width="1" height="1"/><rect x="228" y="290" width="1" height="1"/><rect x="228" y="295" width="1" height="1"/><rect x="228" y="301" width="1" height="1"/><rect x="228" y="307" width="1" height="1"/><rect x="228" y="313" width="1" height="1"/><rect x="228" y="319" width="1" height="1"/><rect x="228" y="325" width="1" height="1"/><rect x="228" y="331" width="1" height="1"/><rect x="228" y="337" width="1" height="1"/><rect x="228" y="343" width="1" height="1"/><rect x="228" y="349" width="1" height="1"/><rect x="228" y="355" width="1" height="1"/><rect x="228" y="361" width="1" height="1"/><rect x="228" y="367" width="1" height="1"/><rect x="228" y="373" width="1" height="1"/><rect x="228" y="378" width="1" height="1"/><rect x="228" y="384" width="1" height="1"/><rect x="228" y="390" width="1" height="1"/><rect x="228" y="396" width="1" height="1"/><rect x="228" y="402" width="1" height="1"/><rect x="228" y="408" width="1" height="1"/><rect x="228" y="414" width="1" height="1"/><rect x="228" y="420" width="1" height="1"/><rect x="228" y="426" width="1" height="1"/><rect x="228" y="432" width="1" height="1"/><rect x="228" y="438" width="1" height="1"/><rect x="228" y="444" width="1" height="1"/><rect x="228" y="450" width="1" height="1"/><rect x="228" y="456" width="1" height="1"/><rect x="228" y="461" width="1" height="1"/><rect x="228" y="467" width="1" height="1"/><rect x="228" y="473" width="1" height="1"/><rect x="228" y="479" width="1" height="1"/><rect x="228" y="485" width="1" height="1"/><rect x="228" y="491" width="1" height="1"/><rect x="228" y="497" width="1" height="1"/><rect x="228" y="503" width="1" height="1"/><rect x="228" y="509" width="1" height="1"/><rect x="228" y="515" width="1" height="1"/><rect x="228" y="521" width="1" height="1"/><rect x="262" y="212" width="1" height="1"/><rect x="262" y="218" width="1" height="1"/><rect x="262" y="224" width="1" height="1"/><rect x="262" y="230" width="1" height="1"/><rect x="262" y="236" width="1" height="1"/><rect x="262" y="242" width="1" height="1"/><rect x="262" y="248" width="1" height="1"/><rect x="262" y="254" width="1" height="1"/><rect x="262" y="260" width="1" height="1"/><rect x="262" y="266" width="1" height="1"/><rect x="262" y="272" width="1" height="1"/><rect x="262" y="278" width="1" height="1"/><rect x="262" y="284" width="1" height="1"/><rect x="262" y="290" width="1" height="1"/><rect x="262" y="295" width="1" height="1"/><rect x="262" y="301" width="1" height="1"/><rect x="262" y="307" width="1" height="1"/><rect x="262" y="313" width="1" height="1"/><rect x="262" y="319" width="1" height="1"/><rect x="262" y="325" width="1" height="1"/><rect x="262" y="331" width="1" height="1"/><rect x="262" y="337" width="1" height="1"/><rect x="262" y="343" width="1" height="1"/><rect x="262" y="349" width="1" height="1"/><rect x="262" y="355" width="1" height="1"/><rect x="262" y="361" width="1" height="1"/><rect x="262" y="367" width="1" height="1"/><rect x="262" y="373" width="1" height="1"/><rect x="262" y="378" width="1" height="1"/><rect x="262" y="384" width="1" height="1"/><rect x="262" y="390" width="1" height="1"/><rect x="262" y="396" width="1" height="1"/><rect x="262" y="402" width="1" height="1"/><rect x="262" y="408" width="1" height="1"/><rect x="262" y="414" width="1" height="1"/><rect x="262" y="420" width="1" height="1"/><rect x="262" y="426" width="1" height="1"/><rect x="262" y="432" width="1" height="1"/><rect x="262" y="438" width="1" height="1"/><rect x="262" y="444" width="1" height="1"/><rect x="262" y="450" width="1" height="1"/><rect x="262" y="456" width="1" height="1"/><rect x="262" y="461" width="1" height="1"/><rect x="262" y="467" width="1" height="1"/><rect x="262" y="473" width="1" height="1"/><rect x="262" y="479" width="1" height="1"/><rect x="262" y="485" width="1" height="1"/><rect x="262" y="491" width="1" height="1"/><rect x="262" y="497" width="1" height="1"/><rect x="262" y="503" width="1" height="1"/><rect x="262" y="509" width="1" height="1"/><rect x="262" y="515" width="1" height="1"/><rect x="262" y="521" width="1" height="1"/><rect x="295" y="212" width="1" height="1"/><rect x="295" y="218" width="1" height="1"/><rect x="295" y="224" width="1" height="1"/><rect x="295" y="230" width="1" height="1"/><rect x="295" y="236" width="1" height="1"/><rect x="295" y="242" width="1" height="1"/><rect x="295" y="248" width="1" height="1"/><rect x="295" y="254" width="1" height="1"/><rect x="295" y="260" width="1" height="1"/><rect x="295" y="266" width="1" height="1"/><rect x="295" y="272" width="1" height="1"/><rect x="295" y="278" width="1" height="1"/><rect x="295" y="284" width="1" height="1"/><rect x="295" y="290" width="1" height="1"/><rect x="295" y="295" width="1" height="1"/><rect x="295" y="301" width="1" height="1"/><rect x="295" y="307" width="1" height="1"/><rect x="295" y="313" width="1" height="1"/><rect x="295" y="319" width="1" height="1"/><rect x="295" y="325" width="1" height="1"/><rect x="295" y="331" width="1" height="1"/><rect x="295" y="337" width="1" height="1"/><rect x="295" y="343" width="1" height="1"/><rect x="295" y="349" width="1" height="1"/><rect x="295" y="355" width="1" height="1"/><rect x="295" y="361" width="1" height="1"/><rect x="295" y="367" width="1" height="1"/><rect x="295" y="373" width="1" height="1"/><rect x="295" y="378" width="1" height="1"/><rect x="295" y="384" width="1" height="1"/><rect x="295" y="390" width="1" height="1"/><rect x="295" y="396" width="1" height="1"/><rect x="295" y="402" width="1" height="1"/><rect x="295" y="408" width="1" height="1"/><rect x="295" y="414" width="1" height="1"/><rect x="295" y="420" width="1" height="1"/><rect x="295" y="426" width="1" height="1"/><rect x="295" y="432" width="1" height="1"/><rect x="295" y="438" width="1" height="1"/><rect x="295" y="444" width="1" height="1"/><rect x="295" y="450" width="1" height="1"/><rect x="295" y="456" width="1" height="1"/><rect x="295" y="461" width="1" height="1"/><rect x="295" y="467" width="1" height="1"/><rect x="295" y="473" width="1" height="1"/><rect x="295" y="479" width="1" height="1"/><rect x="295" y="485" width="1" height="1"/><rect x="295" y="491" width="1" height="1"/><rect x="295" y="497" width="1" height="1"/><rect x="295" y="503" width="1" height="1"/><rect x="295" y="509" width="1" height="1"/><rect x="295" y="515" width="1" height="1"/><rect x="295" y="521" width="1" height="1"/><rect x="328" y="212" width="1" height="1"/><rect x="328" y="218" width="1" height="1"/><rect x="328" y="224" width="1" height="1"/><rect x="328" y="230" width="1" height="1"/><rect x="328" y="236" width="1" height="1"/><rect x="328" y="242" width="1" height="1"/><rect x="328" y="248" width="1" height="1"/><rect x="328" y="254" width="1" height="1"/><rect x="328" y="260" width="1" height="1"/><rect x="328" y="266" width="1" height="1"/><rect x="328" y="272" width="1" height="1"/><rect x="328" y="278" width="1" height="1"/><rect x="328" y="284" width="1" height="1"/><rect x="328" y="290" width="1" height="1"/><rect x="328" y="295" width="1" height="1"/><rect x="328" y="301" width="1" height="1"/><rect x="328" y="307" width="1" height="1"/><rect x="328" y="313" width="1" height="1"/><rect x="328" y="319" width="1" height="1"/><rect x="328" y="325" width="1" height="1"/><rect x="328" y="331" width="1" height="1"/><rect x="328" y="337" width="1" height="1"/><rect x="328" y="343" width="1" height="1"/><rect x="328" y="349" width="1" height="1"/><rect x="328" y="355" width="1" height="1"/><rect x="328" y="361" width="1" height="1"/><rect x="328" y="367" width="1" height="1"/><rect x="328" y="373" width="1" height="1"/><rect x="328" y="378" width="1" height="1"/><rect x="328" y="384" width="1" height="1"/><rect x="328" y="390" width="1" height="1"/><rect x="328" y="396" width="1" height="1"/><rect x="328" y="402" width="1" height="1"/><rect x="328" y="408" width="1" height="1"/><rect x="328" y="414" width="1" height="1"/><rect x="328" y="420" width="1" height="1"/><rect x="328" y="426" width="1" height="1"/><rect x="328" y="432" width="1" height="1"/><rect x="328" y="438" width="1" height="1"/><rect x="328" y="444" width="1" height="1"/><rect x="328" y="450" width="1" height="1"/><rect x="328" y="456" width="1" height="1"/><rect x="328" y="461" width="1" height="1"/><rect x="328" y="467" width="1" height="1"/><rect x="328" y="473" width="1" height="1"/><rect x="328" y="479" width="1" height="1"/><rect x="328" y="485" width="1" height="1"/><rect x="328" y="491" width="1" height="1"/><rect x="328" y="497" width="1" height="1"/><rect x="328" y="503" width="1" height="1"/><rect x="328" y="509" width="1" height="1"/><rect x="328" y="515" width="1" height="1"/><rect x="328" y="521" width="1" height="1"/><rect x="361" y="212" width="1" height="1"/><rect x="361" y="218" width="1" height="1"/><rect x="361" y="224" width="1" height="1"/><rect x="361" y="230" width="1" height="1"/><rect x="361" y="236" width="1" height="1"/><rect x="361" y="242" width="1" height="1"/><rect x="361" y="248" width="1" height="1"/><rect x="361" y="254" width="1" height="1"/><rect x="361" y="260" width="1" height="1"/><rect x="361" y="266" width="1" height="1"/><rect x="361" y="272" width="1" height="1"/><rect x="361" y="278" width="1" height="1"/><rect x="361" y="284" width="1" height="1"/><rect x="361" y="290" width="1" height="1"/><rect x="361" y="295" width="1" height="1"/><rect x="361" y="301" width="1" height="1"/><rect x="361" y="307" width="1" height="1"/><rect x="361" y="313" width="1" height="1"/><rect x="361" y="319" width="1" height="1"/><rect x="361" y="325" width="1" height="1"/><rect x="361" y="331" width="1" height="1"/><rect x="361" y="337" width="1" height="1"/><rect x="361" y="343" width="1" height="1"/><rect x="361" y="349" width="1" height="1"/><rect x="361" y="355" width="1" height="1"/><rect x="361" y="361" width="1" height="1"/><rect x="361" y="367" width="1" height="1"/><rect x="361" y="373" width="1" height="1"/><rect x="361" y="378" width="1" height="1"/><rect x="361" y="384" width="1" height="1"/><rect x="361" y="390" width="1" height="1"/><rect x="361" y="396" width="1" height="1"/><rect x="361" y="402" width="1" height="1"/><rect x="361" y="408" width="1" height="1"/><rect x="361" y="414" width="1" height="1"/><rect x="361" y="420" width="1" height="1"/><rect x="361" y="426" width="1" height="1"/><rect x="361" y="432" width="1" height="1"/><rect x="361" y="438" width="1" height="1"/><rect x="361" y="444" width="1" height="1"/><rect x="361" y="450" width="1" height="1"/><rect x="361" y="456" width="1" height="1"/><rect x="361" y="461" width="1" height="1"/><rect x="361" y="467" width="1" height="1"/><rect x="361" y="473" width="1" height="1"/><rect x="361" y="479" width="1" height="1"/><rect x="361" y="485" width="1" height="1"/><rect x="361" y="491" width="1" height="1"/><rect x="361" y="497" width="1" height="1"/><rect x="361" y="503" width="1" height="1"/><rect x="361" y="509" width="1" height="1"/><rect x="361" y="515" width="1" height="1"/><rect x="361" y="521" width="1" height="1"/><rect x="394" y="212" width="1" height="1"/><rect x="394" y="218" width="1" height="1"/><rect x="394" y="224" width="1" height="1"/><rect x="394" y="230" width="1" height="1"/><rect x="394" y="236" width="1" height="1"/><rect x="394" y="242" width="1" height="1"/><rect x="394" y="248" width="1" height="1"/><rect x="394" y="254" width="1" height="1"/><rect x="394" y="260" width="1" height="1"/><rect x="394" y="266" width="1" height="1"/><rect x="394" y="272" width="1" height="1"/><rect x="394" y="278" width="1" height="1"/><rect x="394" y="284" width="1" height="1"/><rect x="394" y="290" width="1" height="1"/><rect x="394" y="295" width="1" height="1"/><rect x="394" y="301" width="1" height="1"/><rect x="394" y="307" width="1" height="1"/><rect x="394" y="313" width="1" height="1"/><rect x="394" y="319" width="1" height="1"/><rect x="394" y="325" width="1" height="1"/><rect x="394" y="331" width="1" height="1"/><rect x="394" y="337" width="1" height="1"/><rect x="394" y="343" width="1" height="1"/><rect x="394" y="349" width="1" height="1"/><rect x="394" y="355" width="1" height="1"/><rect x="394" y="361" width="1" height="1"/><rect x="394" y="367" width="1" height="1"/><rect x="394" y="373" width="1" height="1"/><rect x="394" y="378" width="1" height="1"/><rect x="394" y="384" width="1" height="1"/><rect x="394" y="390" width="1" height="1"/><rect x="394" y="396" width="1" height="1"/><rect x="394" y="402" width="1" height="1"/><rect x="394" y="408" width="1" height="1"/><rect x="394" y="414" width="1" height="1"/><rect x="394" y="420" width="1" height="1"/><rect x="394" y="426" width="1" height="1"/><rect x="394" y="432" width="1" height="1"/><rect x="394" y="438" width="1" height="1"/><rect x="394" y="444" width="1" height="1"/><rect x="394" y="450" width="1" height="1"/><rect x="394" y="456" width="1" height="1"/><rect x="394" y="461" width="1" height="1"/><rect x="394" y="467" width="1" height="1"/><rect x="394" y="473" width="1" height="1"/><rect x="394" y="479" width="1" height="1"/><rect x="394" y="485" width="1" height="1"/><rect x="394" y="491" width="1" height="1"/><rect x="394" y="497" width="1" height="1"/><rect x="394" y="503" width="1" height="1"/><rect x="394" y="509" width="1" height="1"/><rect x="394" y="515" width="1" height="1"/><rect x="394" y="521" width="1" height="1"/></g>
<rect x="95" y="206" width="1" height="317" fill="#84cc4c" shape-rendering="crispEdges"/>
<rect x="427" y="206" width="1" height="317" fill="#cc50b0" shape-rendering="crispEdges"/>
<rect x="95" y="522" width="333" height="1" fill="#ffffff" shape-rendering="crispEdges"/>
<g shape-rendering="crispEdges"><rect x="93" y="206" width="5" height="1" fill="#84cc4c"/><rect x="425" y="206" width="5" height="1" fill="#cc50b0"/><text x="91" y="211" text-anchor="end" fill="#84cc4c">10</text><text x="432" y="211" fill="#cc50b0">5</text><rect x="93" y="238" width="5" height="1" fill="#84cc4c"/><rect x="425" y="238" width="5" height="1" fill="#cc50b0"/><text x="91" y="243" text-anchor="end" fill="#84cc4c">0</text><text x="432" y="243" fill="#cc50b0">4</text><rect x="93" y="270" width="5" height="1" fill="#84cc4c"/><rect x="425" y="270" width="5" height="1" fill="#cc50b0"/><text x="91" y="275" text-anchor="end" fill="#84cc4c">-10</text><text x="432" y="275" fill="#cc50b0">3</text><rect x="93" y="301" width="5" height="1" fill="#84cc4c"/><rect x="425" y="301" width="5" height="1" fill="#cc50b0"/><text x="91" y="306" text-anchor="end" fill="#84cc4c">-20</text><text x="432" y="306" fill="#cc50b0">2</text><rect x="93" y="333" width="5" height="1" fill="#84cc4c"/><rect x="425" y="333" width="5" height="1" fill="#cc50b0"/><text x="91" y="338" text-anchor="end" fill="#84cc4c">-30</text><text x="432" y="338" fill="#cc50b0">1</text><rect x="93" y="365" width="5" height="1" fill="#84cc4c"/><rect x="425" y="365" width="5" height="1" fill="#cc50b0"/><text x="91" y="370" text-anchor="end" fill="#84cc4c">-40</text><text x="432" y="370" fill="#cc50b0">0</text><rect x="93" y="395" width="5" height="1" fill="#84cc4c"/><rect x="425" y="395" width="5" height="1" fill="#cc50b0"/><text x="91" y="400" text-anchor="end" fill="#84cc4c">-50</text><text x="432" y="400" fill="#cc50b0">-1</text><rect x="93" y="427" width="5" height="1" fill="#84cc4c"/><rect x="425" y="427" width="5" height="1" fill="#cc50b0"/><text x="91" y="432" text-anchor="end" fill="#84cc4c">-60</text><text x="432" y="432" fill="#cc50b0">-2</text><rect x="93" y="459" width="5" height="1" fill="#84cc4c"/><rect x="425" y="459" width="5" height="1" fill="#cc50b0"/><text x="91" y="464" text-anchor="end" fill="#84cc4c">-70</text><text x="432" y="464" fill="#cc50b0">-3</text><rect x="93" y="490" width="5" height="1" fill="#84cc4c"/><rect x="425" y="490" width="5" height="1" fill="#cc50b0"/><text x="91" y="495" text-anchor="end" fill="#84cc4c">-80</text><text x="432" y="495" fill="#cc50b0">-4</text><rect x="93" y="522" width="5" height="1" fill="#84cc4c"/><rect x="425" y="522" width="5" height="1" fill="#cc50b0"/><text x="91" y="527" text-anchor="end" fill="#84cc4c">-90</text><text x="432" y="527" fill="#cc50b0">-5</text><rect x="95" y="519" width="1" height="6" fill="#ffffff"/><rect x="112" y="519" width="1" height="6" fill="#ffffff"/><rect x="129" y="519" width="1" height="6" fill="#ffffff"/><rect x="145" y="519" width="1" height="6" fill="#ffffff"/><rect x="162" y="519" width="1" height="6" fill="#ffffff"/><rect x="178" y="519" width="1" height="6" fill="#ffffff"/><rect x="195" y="519" width="1" height="6" fill="#ffffff"/><rect x="211" y="519" width="1" height="6" fill="#ffffff"/><rect x="228" y="519" width="1" height="6" fill="#ffffff"/><rect x="244" y="519" width="1" height="6" fill="#ffffff"/><rect x="262" y="519" width="1" height="6" fill="#ffffff"/><rect x="278" y="519" width="1" height="6" fill="#ffffff"/><rect x="295" y="519" width="1" height="6" fill="#ffffff"/><rect x="311" y="519" width="1" height="6" fill="#ffffff"/><rect x="328" y="519" width="1" height="6" fill="#ffffff"/><rect x="344" y="519" width="1" height="6" fill="#ffffff"/><rect x="361" y="519" width="1" height="6" fill="#ffffff"/><rect x="377" y="519" width="1" height="6" fill="#ffffff"/><rect x="394" y="519" width="1" height="6" fill="#ffffff"/><rect x="410" y="519" width="1" height="6" fill="#ffffff"/><rect x="427" y="519" width="1" height="6" fill="#ffffff"/><text x="95.5" y="541" text-anchor="middle" fill="#ffffff">0.0</text><text x="129.5" y="541" text-anchor="middle" fill="#ffffff">124.8</text><text x="162.5" y="541" text-anchor="middle" fill="#ffffff">249.6</text><text x="195.5" y="541" text-anchor="middle" fill="#ffffff">374.4</text><text x="228.5" y="541" text-anchor="middle" fill="#ffffff">499.2</text><text x="262.5" y="541" text-anchor="middle" fill="#ffffff">624.0</text><text x="295.5" y="541" text-anchor="middle" fill="#ffffff">748.8</text><text x="328.5" y="541" text-anchor="middle" fill="#ffffff">873.6</text><text x="361.5" y="541" text-anchor="middle" fill="#ffffff">998.4</text><text x="394.5" y="541" text-anchor="middle" fill="#ffffff">1123.2</text></g>
<path d="M96.5,512.5 L96.5,491.5 L97.5,490.5 L101.5,489.5 L103.5,490.5 L105.5,489.5 L108.5,490.5 L111.5,491.5 L114.5,490.5 L118.5,491.5 L122.5,491.5 L126.5,490.5 L128.5,490.5 L131.5,490.5 L134.5,490.5 L137.5,491.5 L140.5,490.5 L143.5,491.5 L146.5,491.5 L149.5,491.5 L153.5,489.5 L157.5,491.5 L161.5,490.5 L165.5,490.5 L168.5,491.5 L170.5,491.5 L172.5,491.5 L176.5,491.5 L178.5,491.5 L181.5,491.5 L183.5,491.5 L187.5,489.5 L190.5,490.5 L193.5,490.5 L196.5,490.5 L199.5,491.5 L201.5,490.5 L205.5,489.5 L209.5,490.5 L211.5,491.5 L215.5,491.5 L217.5,490.5 L220.5,490.5 L224.5,489.5 L227.5,490.5 L230.5,490.5 L233.5,490.5 L235.5,490.5 L239.5,490.5 L241.5,491.5 L243.5,491.5 L245.5,491.5 L249.5,490.5 L253.5,490.5 L255.5,491.5 L258.5,490.5 L260.5,489.5 L264.5,490.5 L267.5,491.5 L270.5,490.5 L273.5,490.5 L276.5,490.5 L278.5,491.5 L281.5,490.5 L284.5,491.5 L286.5,490.5 L290.5,491.5 L292.5,491.5 L294.5,489.5 L296.5,490.5 L299.5,491.5 L302.5,490.5 L304.5,490.5 L307.5,490.5 L309.5,490.5 L311.5,491.5 L314.5,490.5 L316.5,491.5 L320.5,491.5 L322.5,491.5 L325.5,491.5 L327.5,491.5 L330.5,489.5 L333.5,490.5 L337.5,491.5 L339.5,490.5 L342.5,491.5 L346.5,491.5 L348.5,491.5 L352.5,490.5 L354.5,490.5 L358.5,491.5 L361.5,491.5 L364.5,490.5 L366.5,491.5 L369.5,490.5 L371.5,491.5 L373.5,490.5 L376.5,490.5 L378.5,491.5 L382.5,491.5 L384.5,490.5 L387.5,491.5 L391.5,490.5 L394.5,490.5 L396.5,490.5 L400.5,490.5 L402.5,490.5 L406.5,491.5 L410.5,491.5 L413.5,491.5 L416.5,490.5 L420.5,490.5 L423.5,491.5 L426.5,491.5 L427.5,490.5" fill="none" stroke="#30b848" stroke-width="1" shape-rendering="crispEdges"/>
<rect x="95" y="512" width="1" height="10" fill="#1c9038"/>
<path d="M95.5,305.5 L96.5,309.5 L97.5,319.5 L98.5,318.5 L99.5,315.5 L100.5,323.5 L101.5,326.5 L102.5,320.5 L103.5,319.5 L104.5,330.5 L105.5,332.5 L106.5,323.5 L107.5,313.5 L108.5,313.5 L109.5,316.5 L110.5,305.5 L111.5,305.5 L112.5,313.5 L113.5,314.5 L114.5,314.5 L115.5,300.5 L116.5,311.5 L117.5,310.5 L118.5,305.5 L119.5,303.5 L120.5,309.5 L121.5,308.5 L122.5,301.5 L123.5,302.5 L124.5,307.5 L125.5,303.5 L126.5,302.5 L127.5,303.5 L128.5,302.5 L129.5,292.5 L130.5,303.5 L131.5,301.5 L132.5,301.5 L133.5,301.5 L134.5,311.5 L135.5,300.5 L136.5,304.5 L137.5,314.5 L138.5,311.5 L139.5,305.5 L140.5,312.5 L141.5,320.5 L142.5,325.5 L143.5,314.5 L144.5,327.5 L145.5,321.5 L146.5,310.5 L147.5,309.5 L148.5,316.5 L149.5,304.5 L150.5,302.5 L151.5,310.5 L152.5,312.5 L153.5,303.5 L154.5,309.5 L155.5,312.5 L156.5,308.5 L157.5,299.5 L158.5,302.5 L159.5,310.5 L160.5,306.5 L161.5,305.5 L162.5,302.5 L163.5,298.5 L164.5,309.5 L165.5,301.5 L166.5,294.5 L167.5,303.5 L168.5,303.5 L169.5,293.5 L170.5,293.5 L171.5,301.5 L172.5,291.5 L173.5,299.5 L174.5,308.5 L175.5,299.5 L176.5,301.5 L177.5,307.5 L178.5,314.5 L179.5,306.5 L180.5,316.5 L181.5,318.5 L182.5,313.5 L183.5,323.5 L184.5,326.5 L185.5,317.5 L186.5,311.5 L187.5,321.5 L188.5,316.5 L189.5,305.5 L190.5,305.5 L191.5,301.5 L192.5,302.5 L193.5,315.5 L194.5,307.5 L195.5,306.5 L196.5,303.5 L197.5,309.5 L198.5,309.5 L199.5,304.5 L200.5,301.5 L201.5,310.5 L202.5,300.5 L203.5,302.5 L204.5,307.5 L205.5,300.5 L206.5,302.5 L207.5,303.5 L208.5,300.5 L209.5,288.5 L210.5,296.5 L211.5,299.5 L212.5,299.5 L213.5,296.5 L214.5,306.5 L215.5,314.5 L216.5,310.5 L217.5,308.5 L218.5,318.5 L219.5,316.5 L220.5,312.5 L221.5,325.5 L222.5,324.5 L223.5,314.5 L224.5,321.5 L225.5,317.5 L226.5,303.5 L227.5,306.5 L228.5,311.5 L229.5,309.5 L230.5,303.5 L231.5,313.5 L232.5,310.5 L233.5,298.5 L234.5,304.5 L235.5,312.5 L236.5,301.5 L237.5,312.5 L238.5,308.5 L239.5,301.5 L240.5,309.5 L241.5,309.5 L242.5,307.5 L243.5,301.5 L244.5,308.5 L245.5,300.5 L246.5,298.5 L247.5,308.5 L248.5,294.5 L249.5,300.5 L250.5,301.5 L251.5,293.5 L252.5,297.5 L253.5,305.5 L254.5,299.5 L255.5,300.5 L256.5,312.5 L257.5,311.5 L258.5,305.5 L259.5,309.5 L260.5,320.5 L261.5,318.5 L262.5,319.5 L263.5,314.5 L264.5,328.5 L265.5,330.5 L266.5,317.5 L267.5,315.5 L268.5,318.5 L269.5,307.5 L270.5,312.5 L271.5,310.5 L272.5,303.5 L273.5,312.5 L274.5,313.5 L275.5,312.5 L276.5,309.5 L277.5,297.5 L278.5,308.5 L279.5,300.5 L280.5,299.5 L281.5,302.5 L282.5,308.5 L283.5,309.5 L284.5,300.5 L285.5,300.5 L286.5,307.5 L287.5,301.5 L288.5,298.5 L289.5,305.5 L290.5,296.5 L291.5,287.5 L292.5,303.5 L293.5,290.5 L294.5,303.5 L295.5,308.5 L296.5,304.5 L297.5,310.5 L298.5,319.5 L299.5,322.5 L300.5,322.5 L301.5,315.5 L302.5,321.5 L303.5,323.5 L304.5,322.5 L305.5,314.5 L306.5,302.5 L307.5,307.5 L308.5,313.5 L309.5,308.5 L310.5,305.5 L311.5,305.5 L312.5,314.5 L313.5,299.5 L314.5,305.5 L315.5,308.5 L316.5,299.5 L317.5,307.5 L318.5,305.5 L319.5,299.5 L320.5,305.5 L321.5,303.5 L322.5,297.5 L323.5,298.5 L324.5,307.5 L325.5,299.5 L326.5,295.5 L327.5,293.5 L328.5,301.5 L329.5,291.5 L330.5,301.5 L331.5,307.5 L332.5,300.5 L333.5,304.5 L334.5,312.5 L335.5,314.5 L336.5,308.5 L337.5,305.5 L338.5,310.5 L339.5,318.5 L340.5,313.5 L341.5,316.5 L342.5,323.5 L343.5,318.5 L344.5,314.5 L345.5,317.5 L346.5,315.5 L347.5,312.5 L348.5,310.5 L349.5,305.5 L350.5,307.5 L351.5,314.5 L352.5,310.5 L353.5,305.5 L354.5,310.5 L355.5,303.5 L356.5,309.5 L357.5,312.5 L358.5,301.5 L359.5,303.5 L360.5,308.5 L361.5,311.5 L362.5,306.5 L363.5,300.5 L364.5,302.5 L365.5,307.5 L366.5,297.5 L367.5,299.5 L368.5,303.5 L369.5,296.5 L370.5,298.5 L371.5,296.5 L372.5,297.5 L373.5,299.5 L374.5,306.5 L375.5,305.5 L376.5,310.5 L377.5,306.5 L378.5,315.5 L379.5,319.5 L380.5,317.5 L381.5,317.5 L382.5,320.5 L383.5,320.5 L384.5,319.5 L385.5,307.5 L386.5,314.5 L387.5,306.5 L388.5,306.5 L389.5,314.5 L390.5,302.5 L391.5,308.5 L392.5,315.5 L393.5,307.5 L394.5,311.5 L395.5,310.5 L396.5,307.5 L397.5,301.5 L398.5,303.5 L399.5,310.5 L400.5,299.5 L401.5,297.5 L402.5,311.5 L403.5,300.5 L404.5,300.5 L405.5,307.5 L406.5,297.5 L407.5,302.5 L408.5,305.5 L409.5,287.5 L410.5,292.5 L411.5,299.5 L412.5,292.5 L413.5,294.5 L414.5,309.5 L415.5,308.5 L416.5,306.5 L417.5,308.5 L418.5,317.5 L419.5,322.5 L420.5,324.5 L421.5,314.5 L422.5,322.5 L423.5,324.5 L424.5,312.5 L425.5,315.5 L426.5,317.5 L427.5,308.5" fill="none" stroke="#c850c0" stroke-width="1" shape-rendering="crispEdges"/>
<path d="M95.5,395.5 L96.5,395.5 L97.5,404.5 L98.5,424.5 L99.5,425.5 L100.5,414.5 L101.5,421.5 L102.5,426.5 L103.5,419.5 L104.5,414.5 L105.5,422.5 L106.5,424.5 L107.5,413.5 L108.5,424.5 L109.5,416.5 L110.5,417.5 L111.5,420.5 L112.5,424.5 L113.5,426.5 L114.5,423.5 L115.5,424.5 L116.5,432.5 L117.5,434.5 L118.5,430.5 L119.5,438.5 L120.5,446.5 L121.5,433.5 L122.5,435.5 L123.5,434.5 L124.5,426.5 L125.5,424.5 L126.5,424.5 L127.5,414.5 L128.5,409.5 L129.5,406.5 L130.5,412.5 L131.5,412.5 L132.5,408.5 L133.5,405.5 L134.5,416.5 L135.5,418.5 L136.5,412.5 L137.5,408.5 L138.5,411.5 L139.5,416.5 L140.5,423.5 L141.5,417.5 L142.5,412.5 L143.5,412.5 L144.5,423.5 L145.5,412.5 L146.5,418.5 L147.5,424.5 L148.5,416.5 L149.5,421.5 L150.5,425.5 L151.5,417.5 L152.5,426.5 L153.5,427.5 L154.5,422.5 L155.5,421.5 L156.5,439.5 L157.5,436.5 L158.5,430.5 L159.5,442.5 L160.5,443.5 L161.5,441.5 L162.5,428.5 L163.5,431.5 L164.5,432.5 L165.5,432.5 L166.5,427.5 L167.5,423.5 L168.5,414.5 L169.5,424.5 L170.5,410.5 L171.5,408.5 L172.5,418.5 L173.5,409.5 L174.5,406.5 L175.5,415.5 L176.5,414.5 L177.5,419.5 L178.5,408.5 L179.5,407.5 L180.5,413.5 L181.5,422.5 L182.5,416.5 L183.5,414.5 L184.5,417.5 L185.5,422.5 L186.5,416.5 L187.5,410.5 L188.5,416.5 L189.5,426.5 L190.5,421.5 L191.5,420.5 L192.5,428.5 L193.5,429.5 L194.5,418.5 L195.5,421.5 L196.5,432.5 L197.5,432.5 L198.5,432.5 L199.5,428.5 L200.5,437.5 L201.5,435.5 L202.5,438.5 L203.5,429.5 L204.5,423.5 L205.5,431.5 L206.5,429.5 L207.5,426.5 L208.5,417.5 L209.5,415.5 L210.5,408.5 L211.5,419.5 L212.5,413.5 L213.5,404.5 L214.5,402.5 L215.5,416.5 L216.5,406.5 L217.5,406.5 L218.5,418.5 L219.5,419.5 L220.5,411.5 L221.5,409.5 L222.5,421.5 L223.5,411.5 L224.5,413.5 L225.5,422.5 L226.5,413.5 L227.5,424.5 L228.5,424.5 L229.5,416.5 L230.5,416.5 L231.5,423.5 L232.5,430.5 L233.5,420.5 L234.5,423.5 L235.5,433.5 L236.5,427.5 L237.5,424.5 L238.5,436.5 L239.5,429.5 L240.5,428.5 L241.5,436.5 L242.5,426.5 L243.5,425.5 L244.5,429.5 L245.5,429.5 L246.5,415.5 L247.5,419.5 L248.5,426.5 L249.5,410.5 L250.5,411.5 L251.5,412.5 L252.5,415.5 L253.5,408.5 L254.5,402.5 L255.5,404.5 L256.5,418.5 L257.5,416.5 L258.5,417.5 L259.5,410.5 L260.5,412.5 L261.5,417.5 L262.5,415.5 L263.5,417.5 L264.5,415.5 L265.5,419.5 L266.5,422.5 L267.5,424.5 L268.5,419.5 L269.5,420.5 L270.5,418.5 L271.5,414.5 L272.5,428.5 L273.5,422.5 L274.5,431.5 L275.5,432.5 L276.5,428.5 L277.5,430.5 L278.5,440.5 L279.5,429.5 L280.5,435.5 L281.5,437.5 L282.5,428.5 L283.5,432.5 L284.5,427.5 L285.5,427.5 L286.5,420.5 L287.5,423.5 L288.5,427.5 L289.5,411.5 L290.5,417.5 L291.5,418.5 L292.5,407.5 L293.5,409.5 L294.5,415.5 L295.5,411.5 L296.5,412.5 L297.5,413.5 L298.5,409.5 L299.5,408.5 L300.5,411.5 L301.5,421.5 L302.5,415.5 L303.5,410.5 L304.5,413.5 L305.5,425.5 L306.5,411.5 L307.5,417.5 L308.5,421.5 L309.5,426.5 L310.5,421.5 L311.5,416.5 L312.5,428.5 L313.5,421.5 L314.5,422.5 L315.5,424.5 L316.5,430.5 L317.5,439.5 L318.5,433.5 L319.5,434.5 L320.5,440.5 L321.5,426.5 L322.5,430.5 L323.5,436.5 L324.5,421.5 L325.5,414.5 L326.5,421.5 L327.5,418.5 L328.5,415.5 L329.5,407.5 L330.5,414.5 L331.5,407.5 L332.5,409.5 L333.5,416.5 L334.5,410.5 L335.5,415.5 L336.5,419.5 L337.5,413.5 L338.5,408.5 L339.5,417.5 L340.5,419.5 L341.5,412.5 L342.5,414.5 L343.5,424.5 L344.5,420.5 L345.5,415.5 L346.5,426.5 L347.5,415.5 L348.5,418.5 L349.5,425.5 L350.5,427.5 L351.5,417.5 L352.5,419.5 L353.5,429.5 L354.5,428.5 L355.5,424.5 L356.5,434.5 L357.5,437.5 L358.5,437.5 L359.5,432.5 L360.5,434.5 L361.5,434.5 L362.5,426.5 L363.5,430.5 L364.5,432.5 L365.5,422.5 L366.5,414.5 L367.5,424.5 L368.5,421.5 L369.5,416.5 L370.5,414.5 L371.5,416.5 L372.5,405.5 L373.5,406.5 L374.5,418.5 L375.5,407.5 L376.5,411.5 L377.5,422.5 L378.5,416.5 L379.5,413.5 L380.5,412.5 L381.5,423.5 L382.5,415.5 L383.5,410.5 L384.5,412.5 L385.5,421.5 L386.5,415.5 L387.5,422.5 L388.5,427.5 L389.5,426.5 L390.5,426.5 L391.5,421.5 L392.5,421.5 L393.5,431.5 L394.5,422.5 L395.5,422.5 L396.5,431.5 L397.5,433.5 L398.5,423.5 L399.5,439.5 L400.5,439.5 L401.5,423.5 L402.5,432.5 L403.5,423.5 L404.5,419.5 L405.5,417.5 L406.5,425.5 L407.5,418.5 L408.5,408.5 L409.5,418.5 L410.5,405.5 L411.5,402.5 L412.5,406.5 L413.5,414.5 L414.5,406.5 L415.5,411.5 L416.5,419.5 L417.5,409.5 L418.5,411.5 L419.5,416.5 L420.5,419.5 L421.5,413.5 L422.5,412.5 L423.5,419.5 L424.5,422.5 L425.5,417.5 L426.5,413.5 L427.5,422.5" fill="none" stroke="#a030a8" stroke-width="1" shape-rendering="crispEdges"/>
<text x="80" y="192" fill="#84cc4c" letter-spacing="-0.29">Feedback Speed[min-1]</text>
<text x="438" y="192" text-anchor="end" fill="#cc50b0">Torque Reference[%]</text>
<text x="260.3" y="561" text-anchor="middle" fill="#ffffff" letter-spacing="-0.4">Time[ms]</text>
<polygon points="51,233 57,238.5 51,244" fill="#60c040"/>
<polygon points="472,360 466,365.5 472,371" fill="#a040a0"/>
</svg>

<!-- horizontal scrollbar -->
<div class="a" style="left:49px;top:570px;width:426px;height:2px;background:#fff"></div>
<div class="btn" style="left:49px;top:572px;width:17px;height:17px"></div>
<svg class="a" style="left:54px;top:576px" width="5" height="8"><path d="M5,0V8L0,4z" fill="#000"/></svg>
<div class="btn" style="left:66px;top:572px;width:392px;height:17px"></div>
<div class="btn" style="left:458px;top:572px;width:17px;height:17px"></div>
<svg class="a" style="left:466px;top:576px" width="5" height="8"><path d="M0,0V8L5,4z" fill="#000"/></svg>

<!-- checkboxes -->
<div class="sunk2" style="left:51px;top:603px;width:13px;height:13px;background:#fff"></div>
<svg class="a" style="left:54px;top:606px" width="8" height="8"><path d="M0.5,3.5 L3,6 L7.5,1" fill="none" stroke="#000" stroke-width="1.8"/></svg>
<div class="t" style="left:69px;top:603px;letter-spacing:-0.07px">Before adjustment</div>
<div class="sunk2" style="left:182px;top:603px;width:13px;height:13px;background:#fff"></div>
<svg class="a" style="left:185px;top:606px" width="8" height="8"><path d="M0.5,3.5 L3,6 L7.5,1" fill="none" stroke="#000" stroke-width="1.8"/></svg>
<div class="t" style="left:200px;top:603px;letter-spacing:-0.06px">After adjustment</div>

<div class="sunk2" style="left:381px;top:598px;width:62px;height:21px;background:#fff"></div>
<div class="btn" style="left:425px;top:600px;width:17px;height:18px"></div>
<svg class="a" style="left:430px;top:607px" width="8" height="5"><path d="M0,0H8L4,4.5z" fill="#000"/></svg>
<div class="t" style="left:385px;top:603px">FULL</div>
<div class="t" style="left:449px;top:603px">[ms/div]</div>

<!-- verification group -->
<div class="grp" style="left:530px;top:100px;width:331px;height:268px"></div>
<div class="gt" style="left:537px;top:94px">Verification</div>
<div class="t" style="left:540px;top:122px;letter-spacing:-0.28px">Pn304 : Jogging Speed</div>
<div class="sunk2" style="left:580px;top:144px;width:132px;height:22px;background:#f3f3f3"></div>
<div class="t" style="left:583px;top:149px">80</div>
<div class="t" style="left:718px;top:151px">[min-1]</div>
<div class="btn" style="left:781px;top:144px;width:61px;height:26px"></div>
<div class="t" style="left:806px;top:153px;color:#6d6d6d">Edit</div>
<div class="t" style="left:571px;top:174px;letter-spacing:-0.15px">Please execute by 100[min-1] or less.</div>
<svg class="a" style="left:553px;top:216px" width="17" height="17" viewBox="0 0 17 17">
<circle cx="8.5" cy="8.5" r="7.5" fill="#15854a" stroke="#000" stroke-width="1.4"/>
<circle cx="8.5" cy="8.5" r="4.2" fill="none" stroke="#50b848" stroke-width="1.3"/>
<circle cx="8.5" cy="8.5" r="2.4" fill="#98d8d0"/>
<circle cx="8.5" cy="8.5" r="1.3" fill="#fff"/>
</svg>
<div class="sunk2" style="left:579px;top:214px;width:147px;height:22px;background:#f3f3f3"></div>
<div class="t" style="left:579px;top:219px;width:147px;text-align:center;letter-spacing:-0.2px">Servo ON</div>

<div class="btn" style="left:743px;top:192px;width:101px;height:72px"></div>
<div class="t" style="left:772px;top:206px;letter-spacing:-0.36px">Servo OFF</div>
<svg class="a" style="left:770px;top:222px" width="52" height="34" viewBox="0 0 52 34">
<rect x="2" y="19" width="10" height="6" fill="#fff" stroke="#000" stroke-width="1.2"/>
<rect x="11" y="15" width="4" height="15" fill="#000"/>
<rect x="14.5" y="12.5" width="34.5" height="20" fill="#6e624c" stroke="#000" stroke-width="1.4"/>
<circle cx="31" cy="13" r="10.5" fill="#fff" stroke="#000" stroke-width="3"/>
</svg>

<!-- forward / reverse -->
<div class="btn" style="left:561px;top:283px;width:101px;height:71px"></div>
<div class="a" style="left:564px;top:286px;width:96px;height:65px;border:1px dotted #000"></div>
<div class="t" style="left:595px;top:296px">Forward</div>
<svg class="a" style="left:586px;top:310px" width="56" height="38" viewBox="0 0 56 38">
<path d="M4,25 H22 M13,16 V34" stroke="#000" stroke-width="5.5"/>
<circle cx="35.6" cy="23.8" r="9.2" fill="#7c7c7c" stroke="#111" stroke-width="1.1"/>
<path d="M48.5,12.5 C45,5.5 35,3.5 25,9.5" fill="none" stroke="#3a4aa8" stroke-width="4.3"/>
<path d="M18,16.5 L23,3.5 L30,12z" fill="#3a4aa8"/>
</svg>

<div class="btn" style="left:728px;top:283px;width:101px;height:71px"></div>
<div class="a" style="left:731px;top:286px;width:96px;height:65px;border:1px dotted #000"></div>
<div class="t" style="left:763px;top:296px;letter-spacing:-0.21px">Reverse</div>
<svg class="a" style="left:756px;top:310px" width="56" height="38" viewBox="0 0 56 38">
<path d="M31,25 H48" stroke="#000" stroke-width="5.8"/>
<circle cx="16.7" cy="23.8" r="9.2" fill="#7c7c7c" stroke="#111" stroke-width="1.1"/>
<path d="M4.5,12.5 C8,5.5 18,3.5 28,9.5" fill="none" stroke="#3a4aa8" stroke-width="4.3"/>
<path d="M35,17 L30,3.5 L23,12z" fill="#3a4aa8"/>
</svg>

<svg class="a" style="left:0;top:0" width="886" height="764">
<ellipse cx="614.4" cy="313.6" rx="56.6" ry="46" fill="none" stroke="#e88a30" stroke-width="3.3"/>
<ellipse cx="782.3" cy="313.6" rx="56.6" ry="46" fill="none" stroke="#e88a30" stroke-width="3.3"/>
<path d="M681,380 H712 L696.5,395z" fill="#050808"/>
<path d="M681,525 H712 L696.5,540z" fill="#050808"/>
</svg>

<!-- writing results -->
<div class="grp" style="left:530px;top:414px;width:331px;height:98px"></div>
<div class="gt" style="left:537px;top:408px;letter-spacing:-0.1px">Writing Results</div>
<div class="btn" style="left:648px;top:429px;width:95px;height:71px"></div>
<div class="t" style="left:688px;top:443px;color:#6d6d6d;letter-spacing:-0.28px">Write</div>
<svg class="a" style="left:672px;top:460px" width="52" height="32" viewBox="0 0 52 32">
<path d="M2.5,10.5 Q8,-3.5 21,4.5 L27.5,0.5 L33,17 L15.7,12.2 L19.5,8.5 Q9,2 2.5,10.5 Z" fill="#3a48a0"/>
<rect x="13.6" y="21" width="7" height="4.6" fill="#fff" stroke="#000" stroke-width="1.2"/>
<rect x="20" y="18.6" width="3.4" height="9.2" fill="#000"/>
<rect x="23" y="17.6" width="14.6" height="12.6" fill="#6e624c" stroke="#000" stroke-width="1.3"/>
<rect x="37.6" y="4.6" width="11" height="25.6" fill="#e4eef6" stroke="#000" stroke-width="1.3"/>
<path d="M37.6,11.2 H48.6" stroke="#8a7040" stroke-width="0.8"/>
<rect x="43" y="16" width="2" height="10.5" fill="#7a6440"/>
</svg>

<!-- confirm -->
<div class="grp" style="left:532px;top:560px;width:331px;height:71px"></div>
<div class="gt" style="left:539px;top:554px;letter-spacing:-0.1px">Confirm</div>
<div class="btn" style="left:568px;top:577px;width:97px;height:37px"></div>
<div class="t" style="left:607px;top:591px;letter-spacing:-0.5px">Reset</div>
<div class="btn" style="left:727px;top:577px;width:97px;height:37px"></div>
<div class="t" style="left:755px;top:591px;letter-spacing:-0.4px">Completed</div>

<!-- encoder info -->
<div class="grp" style="left:18px;top:642px;width:844px;height:72px"></div>
<div class="gt" style="left:26px;top:636px;letter-spacing:-0.15px">Encoder Information</div>
<div class="t" style="left:30px;top:653px">Target</div>
<div class="t" style="left:96px;top:653px;letter-spacing:-0.12px">Motor Encoder</div>
<div class="t" style="left:30px;top:678px;letter-spacing:-0.2px">Resolution</div>
<div class="t" style="left:96px;top:678px;letter-spacing:-0.19px">16777216[Pulse/rev]</div>
</body></html>
